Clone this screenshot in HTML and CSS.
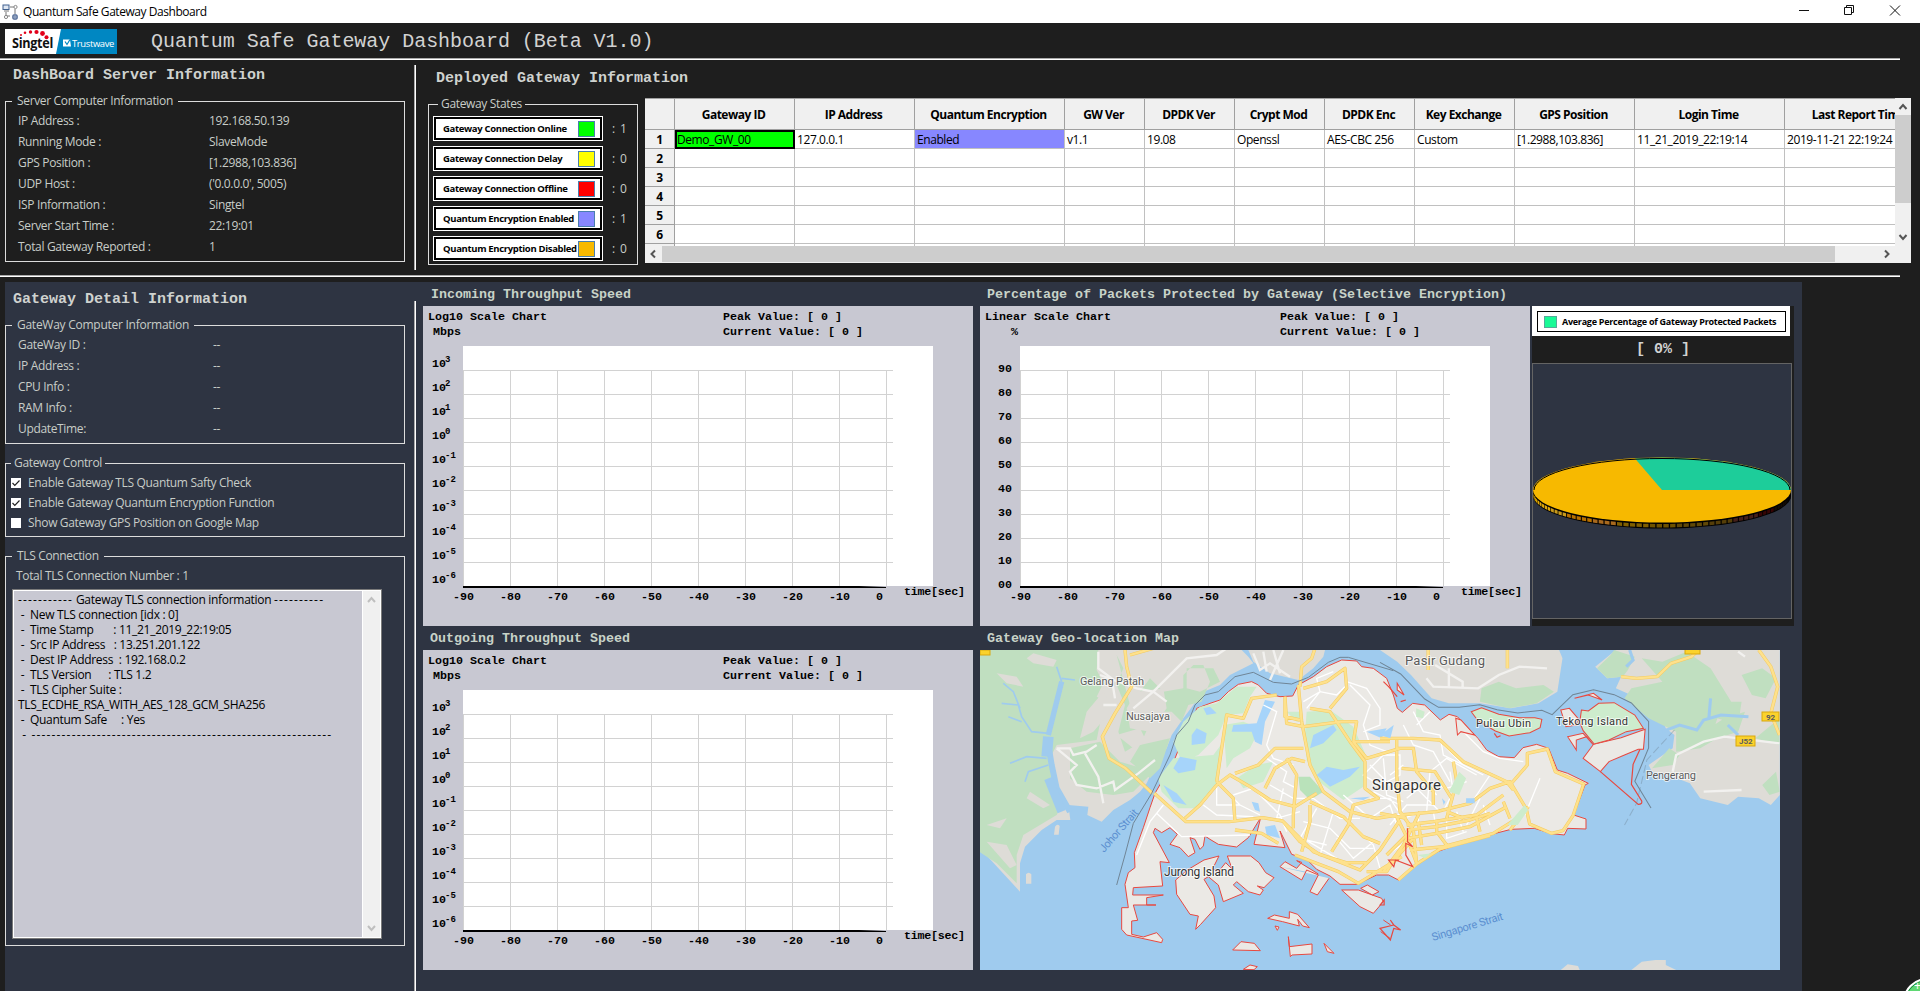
FILE: index.html
```html
<!DOCTYPE html>
<html lang="en">
<head>
<meta charset="utf-8">
<title>Quantum Safe Gateway Dashboard</title>
<link rel="stylesheet" href="styles.css">
</head>
<body>
<header class="titlebar">
  <svg class="app-icon" width="16" height="16" viewBox="0 0 16 16"><rect x="1" y="1" width="6" height="4.5" fill="#dfe7f2" stroke="#41618f"/><path d="M2 7h5M8 3h4M4 8v4h4" stroke="#777" fill="none"/><path d="M13 5v5" stroke="#777"/><circle cx="13.500" cy="3" r="1.600" fill="#fff" stroke="#888"/><circle cx="4" cy="13" r="1.600" fill="#fff" stroke="#888"/><circle cx="13" cy="13" r="3" fill="#60779f"/><path d="M10.500 13h5M13 10.500v5" stroke="#b9c6dc" stroke-width=".6"/></svg>
  <span class="app-name">Quantum Safe Gateway Dashboard</span>
  <svg class="win-controls" width="116" height="23" viewBox="0 0 116 23" fill="none" stroke="#111"><path d="M4 10.500h10"/><path d="M49.500 7.500h7v7h-7zM51.500 7.500v-2h7v7h-2"/><path d="M95 5.500l10 10M105 5.500l-10 10"/></svg>
</header>
<div class="brandbar">
  <svg class="logo" width="112" height="25" viewBox="0 0 112 25"><rect width="112" height="25" fill="#fff"/><path d="M56 0h56v25H51z" fill="#0087c2"/><g fill="#e2001a"><circle cx="16" cy="6" r="1"/><circle cx="20" cy="3.800" r="1.300"/><circle cx="25.500" cy="3" r="1.700"/><circle cx="31.500" cy="3" r="2.100"/><circle cx="37.500" cy="4.500" r="2.400"/><circle cx="41.500" cy="8.200" r="2"/></g><text class="logo-singtel" x="7" y="19" textLength="41" lengthAdjust="spacingAndGlyphs">Singtel</text><path d="M58 10.500h7l1 7h-8z" fill="#fff"/><path d="M60 12.500l2 3 3-5" stroke="#0087c2" stroke-width="1.200" fill="none"/><text class="logo-trust" x="67" y="18" textLength="42" lengthAdjust="spacingAndGlyphs">Trustwave</text></svg>
  <h1>Quantum Safe Gateway Dashboard (Beta V1.0)</h1>
</div>
<section class="top">
  <div class="server">
    <h2>DashBoard Server Information</h2>
    <fieldset class="server-box">
      <legend class="pad">Server Computer Information</legend>
      <dl class="rows">
        <dt>IP Address :</dt><dd>192.168.50.139</dd>
        <dt>Running Mode :</dt><dd>SlaveMode</dd>
        <dt>GPS Position :</dt><dd>[1.2988,103.836]</dd>
        <dt>UDP Host :</dt><dd>('0.0.0.0', 5005)</dd>
        <dt>ISP Information :</dt><dd>Singtel</dd>
        <dt>Server Start Time :</dt><dd>22:19:01</dd>
        <dt>Total Gateway Reported :</dt><dd>1</dd>
      </dl>
    </fieldset>
  </div>
  <div class="vline"></div>
  <div class="deployed">
    <h2>Deployed Gateway Information</h2>
    <div class="deployed-body">
      <fieldset class="states-box">
        <legend>Gateway States</legend>
        <div class="state"><div class="chip"><b>Gateway Connection Online</b><i class="online"></i></div><span>: 1</span></div>
        <div class="state"><div class="chip"><b>Gateway Connection Delay</b><i class="delay"></i></div><span>: 0</span></div>
        <div class="state"><div class="chip"><b>Gateway Connection Offline</b><i class="offline"></i></div><span>: 0</span></div>
        <div class="state"><div class="chip"><b>Quantum Encryption Enabled</b><i class="enabled"></i></div><span>: 1</span></div>
        <div class="state"><div class="chip"><b>Quantum Encryption Disabled</b><i class="disabled"></i></div><span>: 0</span></div>
      </fieldset>
      <div class="table-wrap">
        <div class="viewport">
          <table>
            <colgroup><col class="w30"><col class="w120"><col class="w120"><col class="w150"><col class="w80"><col class="w90"><col class="w90"><col class="w90"><col class="w100"><col class="w120"><col class="w150"><col class="w150"></colgroup>
            <thead><tr><th></th><th>Gateway ID</th><th>IP Address</th><th>Quantum Encryption</th><th>GW Ver</th><th>DPDK Ver</th><th>Crypt Mod</th><th>DPDK Enc</th><th>Key Exchange</th><th>GPS Position</th><th>Login Time</th><th>Last Report Time</th></tr></thead>
            <tbody>
              <tr><th>1</th><td class="picked">Demo_GW_00</td><td>127.0.0.1</td><td class="enc">Enabled</td><td>v1.1</td><td>19.08</td><td>Openssl</td><td>AES-CBC 256</td><td>Custom</td><td>[1.2988,103.836]</td><td>11_21_2019_22:19:14</td><td>2019-11-21 22:19:24</td></tr>
              <tr><th>2</th><td></td><td></td><td></td><td></td><td></td><td></td><td></td><td></td><td></td><td></td><td></td></tr>
              <tr><th>3</th><td></td><td></td><td></td><td></td><td></td><td></td><td></td><td></td><td></td><td></td><td></td></tr>
              <tr><th>4</th><td></td><td></td><td></td><td></td><td></td><td></td><td></td><td></td><td></td><td></td><td></td></tr>
              <tr><th>5</th><td></td><td></td><td></td><td></td><td></td><td></td><td></td><td></td><td></td><td></td><td></td></tr>
              <tr><th>6</th><td></td><td></td><td></td><td></td><td></td><td></td><td></td><td></td><td></td><td></td><td></td></tr>
              <tr><th></th><td></td><td></td><td></td><td></td><td></td><td></td><td></td><td></td><td></td><td></td><td></td></tr>
            </tbody>
          </table>
        </div>
        <div class="vscroll">
          <svg width="16" height="17" viewBox="0 0 16 17"><path d="M4.500 11l3.500-4 3.500 4" class="arrow"/></svg>
          <div class="vthumb"></div>
          <svg width="16" height="17" viewBox="0 0 16 17"><path d="M4.500 6l3.500 4 3.500-4" class="arrow"/></svg>
        </div>
        <div class="hscroll">
          <svg width="17" height="16" viewBox="0 0 17 16"><path d="M10 4.500l-3.500 3.500 3.500 3.500" class="arrow"/></svg>
          <div class="hthumb"></div>
          <svg width="17" height="16" viewBox="0 0 17 16"><path d="M7 4.500l3.500 3.500-3.500 3.500" class="arrow"/></svg>
        </div>
      </div>
    </div>
  </div>
</section>
<div class="hline"></div>
<section class="bottom">
  <div class="detail">
    <h2>Gateway Detail Information</h2>
    <fieldset class="gw-box">
      <legend class="pad">GateWay Computer Information</legend>
      <dl class="rows">
        <dt>GateWay ID :</dt><dd>--</dd>
        <dt>IP Address :</dt><dd>--</dd>
        <dt>CPU Info :</dt><dd>--</dd>
        <dt>RAM Info :</dt><dd>--</dd>
        <dt>UpdateTime:</dt><dd>--</dd>
      </dl>
    </fieldset>
    <fieldset class="ctl-box">
      <legend>Gateway Control</legend>
      <div class="check"><svg width="10" height="10"><rect width="10" height="10" fill="#fff"/><path d="M1.500 5l2.300 2.300L8.500 2.500" stroke="#222" stroke-width="1.200" fill="none"/></svg>Enable Gateway TLS Quantum Safty Check</div>
      <div class="check"><svg width="10" height="10"><rect width="10" height="10" fill="#fff"/><path d="M1.500 5l2.300 2.300L8.500 2.500" stroke="#222" stroke-width="1.200" fill="none"/></svg>Enable Gateway Quantum Encryption Function</div>
      <div class="check"><svg width="10" height="10"><rect width="10" height="10" fill="#fff"/></svg>Show Gateway GPS Position on Google Map</div>
    </fieldset>
    <fieldset class="tls-box">
      <legend class="pad">TLS Connection</legend>
      <div class="tls-total">Total TLS Connection Number : 1</div>
      <div class="log">
        <div class="log-text">
          <div><span class="dash">-----------</span> Gateway TLS connection information <span class="dash">----------</span></div>
          <div> -  New TLS connection [idx : 0]</div>
          <div> -  Time Stamp       : 11_21_2019_22:19:05</div>
          <div> -  Src IP Address   : 13.251.201.122</div>
          <div> -  Dest IP Address  : 192.168.0.2</div>
          <div> -  TLS Version      : TLS 1.2</div>
          <div> -  TLS Cipher Suite :</div>
          <div>TLS_ECDHE_RSA_WITH_AES_128_GCM_SHA256</div>
          <div> -  Quantum Safe     : Yes</div>
          <div class="dash"> - ------------------------------------------------------------</div>
        </div>
        <div class="log-scroll">
          <svg width="17" height="17" viewBox="0 0 17 17"><path d="M5 11l3.500-4 3.500 4" class="arrow off"/></svg>
          <svg width="17" height="17" viewBox="0 0 17 17"><path d="M5 6l3.500 4 3.500-4" class="arrow off"/></svg>
        </div>
      </div>
    </fieldset>
  </div>
  <div class="vline"></div>
  <div class="boards">
    <h3>Incoming Throughput Speed</h3>
    <h3 class="wide">Percentage of Packets Protected by Gateway (Selective Encryption)</h3>
    <svg class="chart" data-scale="log" width="550" height="320"></svg>
    <svg class="chart" data-scale="linear" width="550" height="320"></svg>
    <div class="pie-panel">
      <div class="pie-legend"><div><i></i><b>Average Percentage of Gateway Protected Packets</b></div></div>
      <div class="pie-value">[ 0% ]</div>
      <svg class="pie" width="258" height="254" viewBox="0 0 258 254"></svg>
    </div>
    <h3 class="out">Outgoing Throughput Speed</h3>
    <h3 class="wide">Gateway Geo-location Map</h3>
    <svg class="chart" data-scale="log" width="550" height="320"></svg>
    <svg class="map" width="800" height="320" viewBox="0 0 800 320">
      <defs>
        <path id="roads" d="M465 75l5 50 15 60-50 80-38 70 20 65 50 30 80 75M480 90l70-20M1035 70l-10 30-30 25-5 60M553 505l95 85 130 0 100-12 60 10 50 60 60 40 80 25 60 0M645 580l45-40 50-60 40-30 60 35 60 40 75 20 65-40M740 470l30-200 50 10 25-60 75-10M740 470l50 50 5 70M795 615l80 10 50 30M985 180l10 110 25 130 40 80 80 60 80 20 60-10M945 215l5 80 50 10 115-15 45 0-10 60 110 0M795 445l70-25 50-50 85 0M945 215l0 60 45 10M885 490l30-60 50-30 40 10M1000 190l70-20 55-40 5 60-50 60M1020 250l60 10 60 90 45 60 0 80 40 30-75 20-15 60-50 80M1020 540l0 50-25 90M950 400l30 50-10 120 0 40M1020 530l100 45 60 60 50 20M940 590l90 90 140 55 60-60 60-90M975 690l130 50 60 35 130-80M1150 350l40 50 100-30M1230 340h100l80 5 70 65 130 60 20 25M1620 480l52-60 0-35 60-13 24 68 85 37-32 95-30 45-35 8-65-28-10-45-49-82-60 20-60 45-100 25-110 10M1675 545l-55 70M1280 370l50 0 10 70 50 60 0 40M1280 345l0 105 10 110 40 55 10 100M1230 565l80 15M1310 600l80-10 130-20 80-60M1310 615l90-10 100-20 60-20M1310 640l90-15 100-20 110-60M1320 675l100-10 150-40 80-50M1450 410l10 60-30 110M1295 430l100 10 50 80M1480 580l-50-20M1240 740l60-80 50-100M1250 690l60-60M1260 720l70-80M1190 740l60 0 50-80M1340 715l-30-80-30-60M1345 590l10 70M1400 590l0 30 30 40M1520 580l10 40M1600 530l20 50M1285 765l55-48 70-45 150-40"/>
      </defs>
      <rect width="800" height="320" fill="#9fcbee"/>
      <g transform="translate(-10 -25) scale(.33333)">
        <path class="my" d="M30 75H815l20 20 15 20-70 35-30 30-60 25-20 35-30 40-35 50-15 40-30 40-30 65-20 25-30 25-50 30-35 35-43-20 3-25-60-5 6 45H280l-20 0-45 30-50 50-15 50v85L30 670zM835 75l15 35 50 35 85 20 45-35 30-35 5-20zM168 748q8-10 16 0v28h-16zM255 605q7-10 14-2l-3 26h-14z"/>
        <path class="myg" d="M30 75H385l-5 60 20 40-20 40 40 20-30 60-10 50-120 15-20 40 10 60 20 90-10 20-100 60-20 60v85l-60-60-60-40zM440 90l20 40-20 50 25 60-20 80 20 60 50-30 40-90 50 0 30 30 20-50 40-10 25-60-20-50-30 0-30 30 0 40-60 10-40-40-60 80zM300 370l90-20 60 60 100 30-60 60-60 10-80-10-50-40zM510 360l90-20-30 90-30 30-60-50zM650 130l80 0 20 40-60 30-40-10z"/>
        <path class="my" d="M190 85l70 20-10 20-60-10-20-15zM80 145l60 10 20 30-50-10zM180 500l60 40-20 10-50-30zM50 600l60-20-20 30zM50 650l60 10 30 60-20 10zM350 260l50-60 30 50-60 70-40 20zM500 200l80-10 10 60-50 70-60-10-10-60zM440 330l70-20 20 40-40 20z"/>
        <path class="river" stroke-width="18" d="M300 560l-40-70-15-70-10-60"/><path class="river" stroke-width="26" d="M275 560l-40-100"/><path class="river" stroke-width="32" d="M230 395l5-60"/><path class="river" stroke-width="16" d="M235 330l15-60 25-100"/><path class="river" stroke-width="5" d="M275 170l-15-45M275 160l40 5M235 325l-50-5-30-45-10-35-50-5M150 250l-20-50-30-25M230 400l-60-5-50 20M235 420l-60 20-10 30M155 290l-40-15"/>
        <path class="mw" stroke-width="7" d="M385 80l0 50 40 30 10 60M260 370l40 0 10 20 40-10 30-20M260 370l60 50-20 20 20 40 60 10 50-20 5 25 70-50 50-40M345 385l40 70 15 80M390 150l110 40 50 10 60-60 40-40 90-10 30-20M550 200l-60 50M550 200l40 30M400 240l40 0M850 85l20 50 30-20 60 40M880 80l10 60M910 75l20 70M940 75l-40 90"/>
        <path class="sg" d="M555 505l20-35 30-45 20-50 17-30V315l26-15 12-50 40-15 30-10 25-25 30-22 40-8 20 10 25 25 40 10 38-2 17-33 45-25 40-30 45-20 45 3 15 17 35 5 40 30 20 50 12 40 15 12 31-27 36 5 47 45 26-17 25 7 62 65 26 35 36 20 47 3 26-30 41-10 36 12 26 65 31 10 62 30-10 5-34 90 37 12v30l-55-2-10 20-37-4-53-16-70 3-135 35-93 35-62 40-46 43-31-16-36 0-60 28h-50l-30-25-40-20-30-30-45-15-35-70 15 50-93-10 20-80-37 60-35 28-55-8-25-15-15-10-5 30-10 10-15-30-15-5 15 45-20 12-25-27-30-10 22-30-22-20-25 15-20-13-5 13 48 90-28-3 8 73-88 5-2 22h92l-50 8v22h28l-68 0 13 46-18 2v40l35 8 40-13 18 20-3 10-105-23-15-17v-65h20l-10-70 10-35 20-15-2-45 27-75 20-60z"/>
        <path class="sg" d="M617 765l35-30 50-30 45-12-20 40 20 5 20-25 20 20-15-40 70 0 25 20 20 30 25 15-30 30-20-5 18 12-10 15-35-10-35-30-10 10 30 25-60 25-15-50-30-25-13 8 30 50 5 35-45 50-15 15 8-40-25-5-40-60z"/>
        <path class="sg" d="M930 725l15-15 35 20 15-18-15-5 65 40M930 725l65 40 15-30 35 15-25 50 22 10 35-50M1115 795l50 0 70 25 5 10-30 35-40-20zM1172 790l20-10 35 20-20 10zM893 880l20-10 45 10 0-20 25 8 35 40-20-5-15-20 5 20-50-13zM788 975l25-25 40 5 18 22zM955 935l3 30 68-8v30l-60 3-5 5zM1062 955l30 30-20-5zM820 1033l20-13 22 5-10 9zM1232 920l28 20M1240 885l22 15M915 903l12 3-5 10z"/>
        <path class="sgg" d="M690 245l50-10 60-50 60 0-20 30-20 50-50 5-25 60-60 60-50 20-25-60 30-60zM610 400l120-10 30-40-15 120-60 80-60 0-50-50-10-40zM760 300l60-10 50 20-30 60-50 30-20 30zM1010 260l70-5 70 50 35 80-5 100-60 40-80-60-30-60-5-80zM950 260l40 0 10 25-20 5zM800 460l60-40 50-10-30 60-60 20zM1040 265l60 10-30 30z"/>
        <path fill="#b9e2ba" d="M985 455l35 0 40 45-40 25-30-30z"/>
        <path class="lake" d="M665 330l15-20 30 15-5 30-40 5zM610 430l20-35 50 10-5 30-50 10zM790 300l70-5 25-70 30 5-30 60-10 70-20-10-10-30-60 0zM1030 330l60-30 10 15-40 40-40 15zM1040 450l30-25 50 10 50-10-30 30-60 30zM580 480l30 50 40 10-30-35zM885 605l30-5 15 40-40-10zM1190 320l60-10-15 30zM1140 520l60-5-20 10zM700 250l20-5 20 20-30 5zM845 530l20 5 5 25-15-5z"/>
        <path class="st" d="M560 565l75 70 205-5M500 690l40-100 40-50M740 480l0 60 70 0M700 540l40 30 110 5M790 510l60-20 20 20M750 480l60 60 60 30M880 240l40 20-30 100 20 40 60 20M890 400l60 40-10 30 40 20M1000 230l50-30 50 10 30-30M1010 250l40-50-10-40 50-20M1140 180l60 60-20 60 20 60 50 20M1130 170l60 20 40 60 0 50-50 20M900 480l70 40 60 0 80 60 60 0M870 510l60 60 20 50M940 490l-20 90 70-20M1000 590l80 20 60 60 70 0M1040 550l-50 90 80 20M1090 560l-40 130M1000 640l100 60M1150 600l60 60 20 70M1180 450l60-60 50 0 0 60-60 30zM1200 520l60 0 40 60 60-20M1210 500l80 40M1300 300l30 60 60 20 50 90M1330 260l30 60 50 10 10 60 60 30M1340 300l40-40M1300 430l80 10 50-40 90 50M1310 520l60-50 60 20 60-20M1380 440l-10 120M1440 440l10 60-30 60M1420 360l60 60 60 30M1500 540l60-90M1260 600l50-60 80 0M1490 600l40-80M1260 450l40-30M1250 690l60-40M1430 560l0 80 60-20M1120 510l80 70 60-40 20 60M1100 640l50 60 60-50M1665 570l45-110M1200 420l80 80M1240 400l10 110 50 20M1350 450l50 60M1330 480l80 80M1345 560l0 60M1390 560l10 60M1460 560l20 60M1540 540l20 60M1480 320l60 60 50 20 70 10"/>
        <use href="#roads" class="rdo"/><use href="#roads" class="rd"/>
        <path class="bd" d="M440 780l25-90 25-95 55-90 55-115 20-60 35-40 20-50 30-30 40-10 50-45 55-13 60 30 55 5 50-20 60-45 35-15 25 0 135 40"/>
      </g>
      <g transform="translate(400 -25) scale(.34435 .33333)">
        <path class="my" d="M0 75l50 35 40 40 60 70 50 15h90l90 15 80-15 55-35 15-100-10-25zM640 75h521v435l-26 30-35-20-60-5-30 25-80-20-30-45-50-20-60-15-10-20 70-50 5-40-25-20-20-50-70-45-55-25 15-35-40 5-35-35 60-50zM730 1035l30-25 40-5 30 0 0 15 30 15zM525 1035l20-17 30 5 5 12z"/>
        <path class="myg" d="M295 190l50-20 50 20 80-10 30 20-50 35-80 15-85-20zM680 75l60 20-20 40-15 20-45 5-30-30 40-40zM760 100l60 10 70-30 70 50 60 100 30 0-10 70-60-20-20 60-40 20-60-40-80-40-70-60 20-30 90-20zM1050 150l60-20 40 30-30 60-40-10zM860 320l80 0 60-40 60-20-20 60-60 20-50 30-70 10zM790 430l50-60 30 20-20 30zM1090 340l70-60v80zM1110 480l40-40 11 60-30 10z"/>
        <path class="river" stroke-width="9" d="M820 320l50-20 50 15 20-30 50-15 80 5M725 75l10 30-20 20M955 280l5-60M1010 300l30 30"/>
        <path class="mw" stroke-width="7" d="M135 160l20 25 130 5 60-40 60-25 80 5M160 120l80 50 0 20M200 130l0 60M940 500l110-5M850 440l10-50 80-40 60-15 160 20M1040 80l20 15"/>
        <path class="rdo" d="M140 75l0 60M370 75v55M925 75l-20 20-60 20-40 40-60 5-45-5M1100 75l35 50 20 60-20 80 25 65"/><path class="rd" d="M140 75l0 60M370 75v55M925 75l-20 20-60 20-40 40-60 5-45-5M1100 75l35 50 20 60-20 80 25 65"/>
        <path class="sg" d="M590 400l30-42 80-20 70-25-5 60-15 0-40 17-45 20-25 30zM525 255l25-5 25 30-5 20-30 5zM545 335l45-10 30 35-20-25-30 10 0 30zM565 220l55-15 25 20-40-15zM220 280l15 5 40 45-40-10-10 10zM50 175l20 35-20-15z"/>
        <path class="ubin" d="M265 260l30-12 50 20 60 10 45 0 20 5-5 25-30 15-60 10-40-15-50-30z"/><path class="ubin" d="M585 255l20 3 30-23 45-2 60 37 25 40-50 10-50 25-43 12-32-40-10-25z"/>
        <path class="red" d="M640 440l110 98q12 0 10-10l-30-50 5-60 20-45M332 325l8 12 10-5M10 170l15 15 25 30M60 230l15-5"/>
        <path fill="#cdeccd" d="M105 250l25 10-5 20-20-5zM200 500l30-60 20 20-20 50zM370 600l50-60 10 15-30 45zM110 690l40-5-20 15z"/>
        <path class="lake" d="M250 520l25 0 0 15-25 0zM0 330l40-30-10 40zM180 520l10 10-5 10zM465 540l3 50"/>
        <path class="bd" d="M0 112l60 35 70 75 40 25 60 0 60-8 50 15 60 10 70-8 30 13 60-60 60-15 60 15 50 25 50 55 0 80-40 100 47 80"/><path class="bd" stroke-dasharray="24 10" opacity=".4" d="M855 315l-80 90-30 130-35 65"/>
        <path class="red" d="M80 610v40l15 15-20-10v35l20 35-50-20-5 20-15-20 30 0M0 910l40-10-10-15 10 15 20 15-20-5-10 35zM0 840l12-15 0 15z"/>
      </g>
      <g class="shield"><rect x="0" y="0" width="10" height="5"/><rect x="705" y="-8" width="15" height="12"/><rect x="782" y="62" width="17" height="9"/><rect x="756" y="86" width="19" height="10"/></g>
      <g class="place">
        <text x="100" y="35" textLength="64">Gelang Patah</text><text x="146" y="70" textLength="44">Nusajaya</text>
        <text class="p13" x="425" y="15" textLength="80">Pasir Gudang</text><text class="dark" x="496" y="77" textLength="55">Pulau Ubin</text><text class="dark" x="576" y="75" textLength="72">Tekong Island</text><text x="666" y="129" textLength="50">Pengerang</text>
        <text class="dark p12" x="184" y="226" textLength="70">Jurong Island</text><text class="dark p15" x="392" y="140" textLength="69">Singapore</text>
        <text class="tiny" x="786" y="70">92</text><text class="tiny" x="759" y="94">J52</text>
        <text class="sea" transform="translate(124 203) rotate(-49)" textLength="53">Johor Strait</text><text class="sea" transform="translate(453 291) rotate(-17)" textLength="74">Singapore Strait</text>
      </g>
    </svg>
  </div>
</section>
<div class="bubble">+</div>
<script src="charts.js"></script>
</body>
</html>
```
FILE: styles.css
```css
* { box-sizing: border-box; }
body { margin: 0; width: 1920px; height: 991px; overflow: hidden; position: relative; background: #1e1e1e; color: #c8cdc8; font: 12px/18px "Open Sans", sans-serif; letter-spacing: -.34px; }
svg { display: block; flex: none; }
h1, h2, h3 { margin: 0; font-family: "Liberation Mono", monospace; letter-spacing: 0; color: #c8d2c8; white-space: pre; }
h1 { font-size: 20px; line-height: 35px; font-weight: 400; letter-spacing: -.04px; color: #d2d2d2; }
h2 { font-size: 15px; line-height: 20px; font-weight: 700; color: #cfd2cf; }
h3 { font-size: 13.333px; line-height: 26px; height: 24px; font-weight: 700; padding-left: 8px; }

.titlebar { display: flex; align-items: center; height: 23px; background: #fff; color: #000; }
.app-icon { margin-left: 2px; }
.app-name { margin-left: 5px; flex: 1; letter-spacing: -.45px; }
.win-controls { margin-right: 9px; }

.brandbar { display: flex; align-items: center; width: 1900px; height: 37px; border-bottom: 1px solid #fff; box-shadow: inset 0 -1px #aaa; }
.logo { margin: 0 34px 0 5px; }
.logo-singtel { font: 700 14px "Open Sans", sans-serif; fill: #111; }
.logo-trust { font: 400 9px "Open Sans", sans-serif; fill: #fff; }

.top { display: flex; height: 214px; }
.server { width: 414px; padding: 6px 9px 0 5px; }
.server h2 { margin-left: 8px; }
.vline { width: 2px; border-left: 1px solid #aaa; border-right: 1px solid #fff; flex: none; }
.top .vline { margin-top: 5px; height: 205px; }

fieldset { margin: 0; padding: 0; border: 1px solid #dcdcdc; min-width: 0; }
legend { height: 18px; margin-left: 6px; padding: 0 3px; white-space: nowrap; }
legend.pad { padding: 0 5px; }
.rows { display: grid; grid-template-columns: 191px 1fr; grid-auto-rows: 21px; line-height: 21px; margin: 0; padding: 1px 0 0 12px; }
.rows dd { margin: 0; }
.server-box { height: 170px; width: 400px; margin-top: 6px; }
.server-box .rows { padding-top: 0; }

.deployed { padding: 9px 0 0 13px; }
.deployed h2 { margin-left: 7px; }
.deployed-body { display: flex; margin-top: 6px; }
.states-box { width: 210px; height: 170px; margin-left: -1px; padding-left: 4px; }
.state { display: flex; align-items: center; margin-bottom: 5px; height: 25px; }
.state > span { letter-spacing: .9px; }
.states-box legend + .state { margin-top: 3px; }
.states-box legend { margin-left: 5px; }
.chip { display: flex; align-items: center; width: 170px; height: 25px; padding-left: 10px; background: #fff; box-shadow: inset 0 0 0 1px #fff, inset 0 0 0 3px #000; color: #000; margin-right: 9px; }
.chip b { width: 135px; font-size: 9.5px; white-space: nowrap; letter-spacing: -.33px; }
.chip i { width: 17px; height: 16px; border: 1px solid #4a7fae; }
.online { background: #00ff00; } .delay { background: #ffff00; } .offline { background: #ff0000; } .enabled { background: #8787ff; } .disabled { background: #f7b900; }

.table-wrap { display: grid; grid-template: 148px 17px / 1250px 16px; align-self: start; margin: 3px 0 0 7px; background: #f0f0f0; }
.viewport { overflow: hidden; background: #fff; }
table { table-layout: fixed; width: 1290px; border-collapse: separate; border-spacing: 0; color: #000; letter-spacing: -.42px; }
.w30 { width: 30px; } .w80 { width: 80px; } .w90 { width: 90px; } .w100 { width: 100px; } .w120 { width: 120px; } .w150 { width: 150px; }
th, td { height: 19px; padding: 1px 2px 0; border: solid #c0c0c0; border-width: 0 1px 1px 0; line-height: 17px; text-align: left; white-space: nowrap; }
th { background: #f0f0f0; border-color: #a0a0a0; text-align: center; font-weight: 700; letter-spacing: -.5px; }
thead th { height: 32px; border-top-width: 1px; padding-top: 0; padding-right: 4px; }
td.picked { background: #00ff00; border: 2px solid #000; padding: 0; line-height: 15px; }
td.enc { background: #8787ff; }
.vscroll { display: flex; flex-direction: column; }
.vthumb { height: 89px; margin-bottom: 26px; background: #cdcdcd; }
.hscroll { display: flex; grid-column: 1; }
.hthumb { width: 1173px; height: 16px; background: #cdcdcd; margin-right: 43px; }
.arrow { fill: none; stroke: #555; stroke-width: 2; }
.arrow.off { stroke: #bfbfbf; }
.hline { width: 1900px; height: 2px; margin-top: 1px; background: #fff; border-top: 1px solid #aaa; }

.bottom { display: flex; width: 1797px; height: 709px; margin: 5px 0 0 5px; background: #2e3442; }
.detail { width: 409px; padding-top: 8px; }
.detail h2 { margin-left: 8px; }
.detail fieldset { width: 400px; }
.gw-box { height: 128px; margin-top: 6px; }
.gw-box legend { letter-spacing: -.26px; }
.gw-box .rows { grid-template-columns: 195px 1fr; padding-top: 0; }
.ctl-box { height: 83px; margin-top: 10px; }
.ctl-box legend { margin-left: 5px; }
.check { display: flex; align-items: center; gap: 7px; height: 20px; padding-left: 5px; }
.ctl-box legend + .check { margin-top: 1px; }
.tls-box { height: 399px; margin-top: 10px; }
.tls-total { padding-left: 10px; line-height: 22px; height: 20px; margin-bottom: 4px; }
.log { display: flex; width: 370px; height: 350px; margin-left: 6px; border: 1px solid #7a7a7a; box-shadow: inset 0 0 0 1px #fff; background: #c8c8d2; color: #000; padding: 1px; }
.log-text { flex: 1; padding: 1px 0 0 4px; line-height: 15px; letter-spacing: -.3px; }
.log-text > div { height: 15px; white-space: pre; }
.log .dash { letter-spacing: 1.15px; }
.log-scroll { display: flex; flex-direction: column; justify-content: space-between; width: 18px; background: #f0f0f0; border-left: 1px solid #fff; }
.bottom > .vline { margin-top: 19px; }

.boards { display: grid; grid-template: 24px 320px 24px 320px / 550px 550px 262px; column-gap: 7px; padding-left: 7px; align-content: start; width: 1386px; }
.boards .wide { grid-column: 2 / 4; padding-left: 7px; }
.boards .out { padding-left: 7px; }
.map { grid-column: 2 / 4; }
.chart { background: #c8c8d2; }
.chart text { font: 700 11.667px "Liberation Mono", monospace; letter-spacing: 0; fill: #000; white-space: pre; }
.pie-panel { margin-left: -5px; width: 262px; background: #1e1e1e; }
.pie-legend { width: 258px; height: 30px; padding: 5px 4px 4px 5px; background: #fff; }
.pie-legend div { display: flex; align-items: center; height: 21px; border: 1px solid #000; padding-left: 6px; color: #000; }
.pie-legend i { width: 13px; height: 12px; background: #19fa96; border: 1px solid #5a9; margin-right: 5px; }
.pie-legend b { font-size: 9px; letter-spacing: -.26px; white-space: nowrap; }
.pie-value { height: 27px; font: 700 15px/28px "Liberation Mono", monospace; letter-spacing: 0; color: #d2d2d2; text-align: center; }
.pie { border: 1px solid #646464; width: 260px; height: 256px; background: #2e3442; }

.my { fill: #dedcd7; } .myg { fill: #c0dfc0; } .river { fill: none; stroke: #9fcbee; }
.mw { fill: none; stroke: #f2f1ef; } .sg { fill: #ebe9e5; stroke: #e8483f; stroke-width: 3; } .sgg { fill: #cdeccd; }
.lake { fill: #a6d4fa; } .st { fill: none; stroke: #fff; stroke-width: 4; }
.rdo { fill: none; stroke: #f3cb62; stroke-width: 10; stroke-linejoin: round; } .rd { fill: none; stroke: #fee18c; stroke-width: 7; stroke-linejoin: round; }
.bd { fill: none; stroke: #6f8596; stroke-width: 3; } .red { fill: none; stroke: #e8483f; stroke-width: 3.500; }
.ubin { fill: #cdeccd; stroke: #e8483f; stroke-width: 3; }
.shield { fill: #fbd22c; stroke: #d9a70e; }
.place text { font: 11px Roboto, sans-serif; letter-spacing: 0; fill: #5c5c5c; stroke: #fff; stroke-width: 2px; stroke-opacity: .7; paint-order: stroke; }
.place .dark { fill: #333; } .place .p12 { font-size: 12px; } .place .p13 { font-size: 13px; } .place .p15 { font-size: 15px; }
.place .tiny { font-size: 8px; font-weight: 700; stroke: none; }
.place .sea { fill: #5b8fd0; stroke: none; }
.bubble { position: absolute; left: 1903px; top: 978px; width: 48px; height: 48px; border: 2px solid #fff; border-radius: 50%; background: #5fd873; box-shadow: inset 0 0 0 1px #158a3c; color: #fff; padding-left: 9px; line-height: 12px; }
```
FILE: charts.js
```js
const NS = 'http://www.w3.org/2000/svg';

function add(parent, tag, attrs, text) {
  const el = document.createElementNS(NS, tag);
  for (const key in attrs) el.setAttribute(key, attrs[key]);
  if (text !== undefined) el.textContent = text;
  parent.appendChild(el);
  return el;
}

function drawChart(svg) {
  const log = svg.dataset.scale === 'log';
  add(svg, 'rect', { x: 40, y: 40, width: 470, height: 240, fill: '#fff' });
  for (let i = 0; i < 9; i++) add(svg, 'rect', { x: 40, y: 64 + 24 * i, width: 430, height: 1, fill: '#d2d2d2' });
  for (let i = 0; i < 10; i++) add(svg, 'rect', { x: 40 + 47 * i, y: 64, width: 1, height: 216, fill: '#d2d2d2' });
  add(svg, 'path', { d: 'M40 280h396l27 1v1H40z', fill: '#000' });
  add(svg, 'text', { x: 5, y: 14 }, log ? 'Log10 Scale Chart' : 'Linear Scale Chart');
  add(svg, 'text', { x: log ? 10 : 31, y: 29 }, log ? 'Mbps' : '%');
  add(svg, 'text', { x: 300, y: 14 }, 'Peak Value: [ 0 ]');
  add(svg, 'text', { x: 300, y: 29 }, 'Current Value: [ 0 ]');
  for (let i = 0; i < 10; i++) {
    if (log) {
      add(svg, 'text', { x: 9, y: 61 + 24 * i }, '10');
      add(svg, 'text', { x: 22, y: 56 + 24 * i, style: 'font-size:9px' }, String(3 - i));
    } else {
      add(svg, 'text', { x: 18, y: 66 + 24 * i }, i === 9 ? '00' : String(90 - 10 * i));
    }
    add(svg, 'text', { x: 30 + 47 * i, y: 294 }, String(-90 + 10 * i));
  }
  add(svg, 'text', { x: 481, y: 289, textLength: 61 }, 'time[sec]');
}

function drawPie(svg) {
  const cx = 129, cy = 126, rx = 129, ry = 32.5;
  add(svg, 'path', { d: `M0 ${cy}v6a${rx} ${ry} 0 0 0 258 0v-6z`, fill: '#000' });
  const shades = ['#050505', '#150c05', '#360404', '#45201a', '#553e08', '#604807', '#6f5200', '#805f00', '#a8691e', '#b87000', '#c99a1c', '#e0a80c', '#f0b400'];
  for (let a = 3; a < 177; a += 3) {
    const p = a * Math.PI / 180, q = (a + 2.4) * Math.PI / 180;
    const x1 = cx + rx * Math.cos(p), x2 = cx + rx * Math.cos(q);
    const y1 = cy + ry * Math.sin(p), y2 = cy + ry * Math.sin(q);
    add(svg, 'path', { d: `M${x1} ${y1 + 1.5}L${x2} ${y2 + 1.5}v3.500L${x1} ${y1 + 5}z`, fill: shades[Math.floor(a / 177 * shades.length)] });
  }
  add(svg, 'ellipse', { cx, cy, rx, ry, fill: '#f7b900' });
  add(svg, 'path', { d: `M${cx} ${cy}L102 94.500A${rx} ${ry} 0 0 1 258 ${cy}z`, fill: '#1dcd9a' });
  add(svg, 'path', { d: `M1 ${cy}a${rx - 1} ${ry - 1} 0 0 1 256 0`, fill: 'none', stroke: '#000' });
}

document.querySelectorAll('.chart').forEach(drawChart);
drawPie(document.querySelector('.pie'));
```
